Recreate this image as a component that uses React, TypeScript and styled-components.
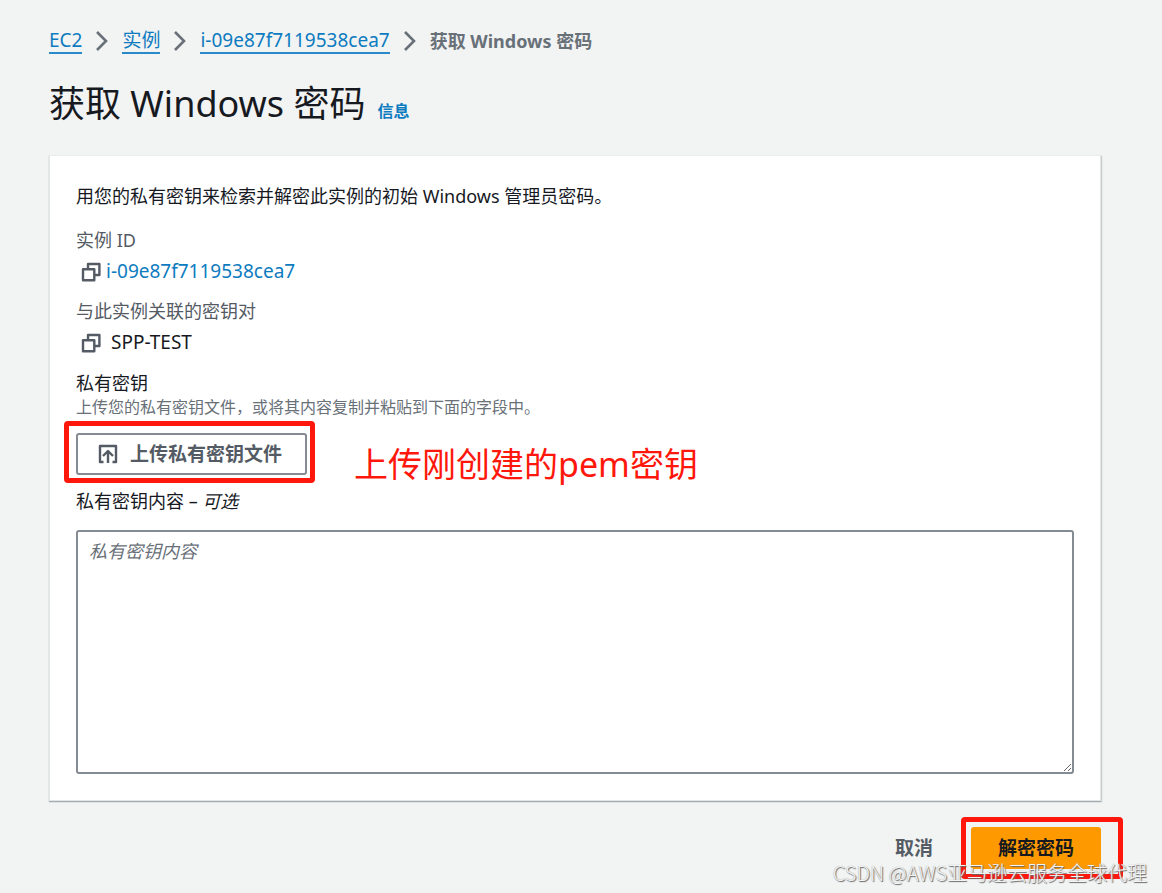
import React from "react";
import styled, { createGlobalStyle, css } from "styled-components";

const Global = createGlobalStyle`
  *, *::before, *::after { box-sizing: border-box; }
  body { margin: 0; background: #f2f3f3; }
  body, button, textarea {
    font-family: "Noto Sans", "Noto Sans CJK SC", sans-serif;
    font-size: 18px;
    line-height: 24px;
    color: #16191f;
  }
`;

const Page = styled.main`
  position: relative;
  min-height: 100vh;
  padding: 28px 61px 24px 49px;
`;

const Crumbs = styled.ol`
  display: flex;
  align-items: center;
  gap: 11px;
  margin: 0;
  padding: 0;
  list-style: none;
`;

const Crumb = styled.li`
  display: flex;
  align-items: center;
  gap: 11px;
  height: 25px;
`;

const CrumbLink = styled.a`
  color: #0d7bc0;
  font-size: 19px;
  text-decoration: none;
  border-bottom: 2px solid #2a8ac9;
`;

const Current = styled.span`
  color: #687078;
  font-weight: 700;
`;

const Header = styled.header`
  display: flex;
  align-items: baseline;
  gap: 12px;
  margin: 27px 0;
`;

const Title = styled.h1`
  margin: 0;
  font-size: 36px;
  line-height: 48px;
  font-weight: 400;
`;

const InfoLink = styled.a`
  color: #0d7bc0;
  font-size: 16px;
  font-weight: 700;
  text-decoration: none;
`;

const Card = styled.section`
  padding: 26px;
  background: #fff;
  border: 1px solid #e3e6e6;
  border-top-color: #eaeded;
  box-shadow: 0 1px 1px #a3adae, 1px 1px 1px #cdd3d3;
`;

const Intro = styled.p`
  margin: 0 0 15px;
  line-height: 28px;
`;

const Details = styled.dl`
  margin: 0 0 13px;
  display: grid;
  gap: 9px;
`;

const Term = styled.dt`
  color: #545b64;
  line-height: 31px;
`;

const Value = styled.dd<{ $gap: number }>`
  display: flex;
  align-items: center;
  gap: ${(p) => p.$gap}px;
  margin: 0;
  padding-left: 5px;
  font-size: 19px;
  line-height: 31px;
`;

const ValueLink = styled.a`
  color: #0d7bc0;
  text-decoration: none;
`;

const IconButton = styled.button`
  display: flex;
  padding: 0;
  border: 0;
  background: none;
`;

const FieldTitle = styled.div``;

const Hint = styled.div`
  color: #687078;
  font-size: 16px;
`;

const Marked = styled.div<{ $inset: string }>`
  position: relative;
  width: fit-content;

  &::after {
    content: "";
    position: absolute;
    inset: ${(p) => p.$inset};
    border: 5px solid #ff170b;
    border-radius: 4px;
    pointer-events: none;
  }
`;

const Note = styled.span`
  position: absolute;
  left: 278px;
  top: 9px;
  color: #ff170b;
  font-size: 34px;
  line-height: 44px;
  white-space: nowrap;
`;

const UploadRow = styled.div`
  margin: 14px 0;
`;

const Button = styled.button<{ $kind: "normal" | "primary" | "link" }>`
  display: flex;
  align-items: center;
  gap: 12px;
  height: 42px;
  border: 0;
  border-radius: 3px;
  background: none;
  color: #545b64;
  font-size: 19px;
  font-weight: 700;
  white-space: nowrap;
  padding: 0;

  ${(p) =>
    p.$kind === "normal" &&
    css`
      padding: 0 23px 0 20px;
      border: 2px solid #848b93;
      background: #fff;
    `}
  ${(p) =>
    p.$kind === "primary" &&
    css`
      padding: 0 27px;
      background: #ff9900;
      color: #16191f;
    `}
`;

const Label = styled.label`
  display: block;
  margin-bottom: 17px;
`;

const KeyText = styled.textarea`
  display: block;
  width: 100%;
  height: 244px;
  padding: 7px 11px;
  border: 2px solid #848b93;
  border-radius: 3px;
  background: #fff;

  &::placeholder {
    color: #687078;
    font-style: italic;
  }
`;

const Actions = styled.footer`
  display: flex;
  justify-content: flex-end;
  gap: 38px;
  margin-top: 26px;
`;

const Watermark = styled.div`
  position: absolute;
  right: 15px;
  bottom: 6px;
  color: #f4f4f4;
  font-family: "Noto Sans CJK SC", sans-serif;
  font-size: 20px;
  font-weight: 300;
  line-height: 28px;
  text-shadow: 1px 1px 1px #666, 0 0 1px #999;
`;

const Chevron = () => (
  <svg width="18" height="22" viewBox="0 0 18 22" fill="none" stroke="#687078" strokeWidth="2.6" aria-hidden="true">
    <path d="M4 2l9 9-9 9" />
  </svg>
);

const CopyIcon = () => (
  <svg width="20" height="20" viewBox="0 0 20 20" fill="none" stroke="#545b64" strokeWidth="2.4" strokeLinejoin="round" aria-hidden="true">
    <path d="M2 7.3h11.3v11H2z" />
    <path d="M7 7V2h11.4v11H13.5" />
  </svg>
);

const UploadIcon = () => (
  <svg width="20" height="20" viewBox="0 0 20 20" fill="none" stroke="#545b64" strokeWidth="2.4" strokeLinejoin="round" aria-hidden="true">
    <path d="M5.5 18H2V2h16v16h-3.5" />
    <path d="M10 19V7M5 12l5-5 5 5" />
  </svg>
);

export default function App() {
  return (
    <>
      <Global />
      <Page>
        <nav aria-label="breadcrumb">
          <Crumbs>
            <Crumb><CrumbLink href="#ec2">EC2</CrumbLink><Chevron /></Crumb>
            <Crumb><CrumbLink href="#instances">实例</CrumbLink><Chevron /></Crumb>
            <Crumb><CrumbLink href="#instance">i-09e87f7119538cea7</CrumbLink><Chevron /></Crumb>
            <Crumb><Current aria-current="page">获取 Windows 密码</Current></Crumb>
          </Crumbs>
        </nav>
        <Header>
          <Title>获取 Windows 密码</Title>
          <InfoLink href="#info">信息</InfoLink>
        </Header>
        <Card>
          <Intro>用您的私有密钥来检索并解密此实例的初始 Windows 管理员密码。</Intro>
          <Details>
            <div>
              <Term>实例 ID</Term>
              <Value $gap={5}>
                <IconButton type="button" aria-label="复制实例 ID"><CopyIcon /></IconButton>
                <ValueLink href="#instance">i-09e87f7119538cea7</ValueLink>
              </Value>
            </div>
            <div>
              <Term>与此实例关联的密钥对</Term>
              <Value $gap={10}>
                <IconButton type="button" aria-label="复制密钥对"><CopyIcon /></IconButton>
                SPP-TEST
              </Value>
            </div>
          </Details>
          <FieldTitle>私有密钥</FieldTitle>
          <Hint>上传您的私有密钥文件，或将其内容复制并粘贴到下面的字段中。</Hint>
          <UploadRow>
            <Marked $inset="-12px -8px -8px -12px">
              <Button type="button" $kind="normal"><UploadIcon />上传私有密钥文件</Button>
              <Note>上传刚创建的pem密钥</Note>
            </Marked>
          </UploadRow>
          <Label htmlFor="key">私有密钥内容 – <i>可选</i></Label>
          <KeyText id="key" placeholder="私有密钥内容" />
        </Card>
        <Actions>
          <Button type="button" $kind="link">取消</Button>
          <Marked $inset="-10px -22px -10px -10px">
            <Button type="submit" $kind="primary">解密密码</Button>
          </Marked>
        </Actions>
        <Watermark>CSDN @AWS亚马逊云服务全球代理</Watermark>
      </Page>
    </>
  );
}
